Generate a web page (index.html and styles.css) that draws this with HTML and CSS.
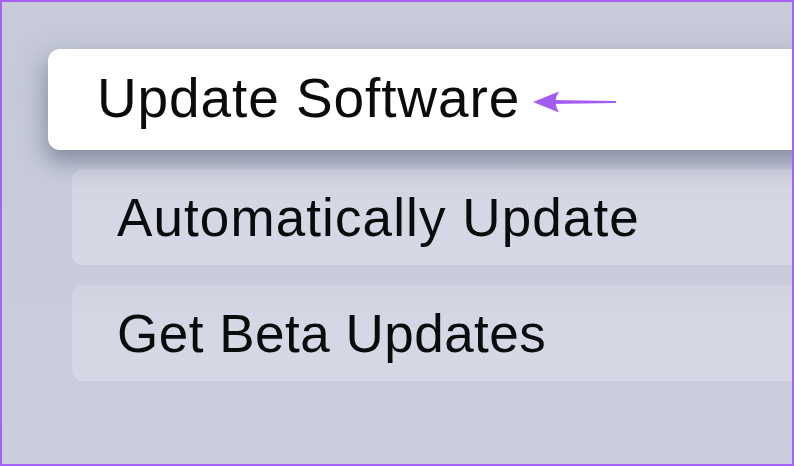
FILE: index.html
```html
<!DOCTYPE html>
<html>
<head>
<meta charset="utf-8">
<link rel="stylesheet" href="styles.css">
</head>
<body>
<div class="screen">
  <div class="menu">
    <div class="item item-focused">
      <span class="label">Update Software</span>
      <svg class="arrow" width="84" height="24" viewBox="0 0 84 24">
        <path d="M0 12 L26 1.5 Q19 12 26 22.5 Z" fill="#a25cf2"/>
        <path d="M16 10 L83 11 L83 13 L16 14 Z" fill="#a25cf2"/>
      </svg>
    </div>
    <div class="item item-plain">
      <span class="label label-sm">Automatically Update</span>
    </div>
    <div class="item item-plain item-last">
      <span class="label label-sm label-tight">Get Beta Updates</span>
    </div>
  </div>
</div>
</body>
</html>
```

FILE: styles.css
```css
html, body {
  margin: 0;
  padding: 0;
}
body {
  width: 794px;
  height: 466px;
  overflow: hidden;
  font-family: "Liberation Sans", Arial, sans-serif;
}
.screen {
  box-sizing: border-box;
  width: 794px;
  height: 466px;
  border: 2px solid #a862f3;
  background: linear-gradient(180deg, #c6cad9 0%, #c9cddd 100%);
  overflow: hidden;
}
.menu {
  display: flex;
  flex-direction: column;
  padding-top: 47px;
}
.item {
  display: flex;
  align-items: center;
  box-sizing: border-box;
}
.item-focused {
  position: relative;
  z-index: 1;
  height: 101px;
  margin-left: 46px;
  margin-right: -40px;
  padding-left: 49px;
  padding-bottom: 3px;
  background: #ffffff;
  border-radius: 12px;
  box-shadow: 0 12px 18px rgba(80, 86, 110, 0.38), -6px 8px 30px rgba(90, 96, 125, 0.25);
}
.item-plain {
  height: 96px;
  margin-left: 70px;
  margin-right: -40px;
  margin-top: 19px;
  padding-left: 45px;
  border-radius: 11px;
  background: linear-gradient(180deg, #d0d4e1 0%, #d4d8e4 40%, #d5d9e5 100%);
}
.item-last {
  margin-top: 20px;
}
.label {
  font-size: 55px;
  line-height: 1;
  letter-spacing: 0.9px;
  color: #0b0b0d;
  white-space: nowrap;
}
.label-sm {
  font-size: 53px;
  letter-spacing: 1.1px;
}
.label-tight {
  letter-spacing: 0.5px;
}
.arrow {
  margin-left: 13px;
  margin-top: 8px;
  flex: none;
}
```
